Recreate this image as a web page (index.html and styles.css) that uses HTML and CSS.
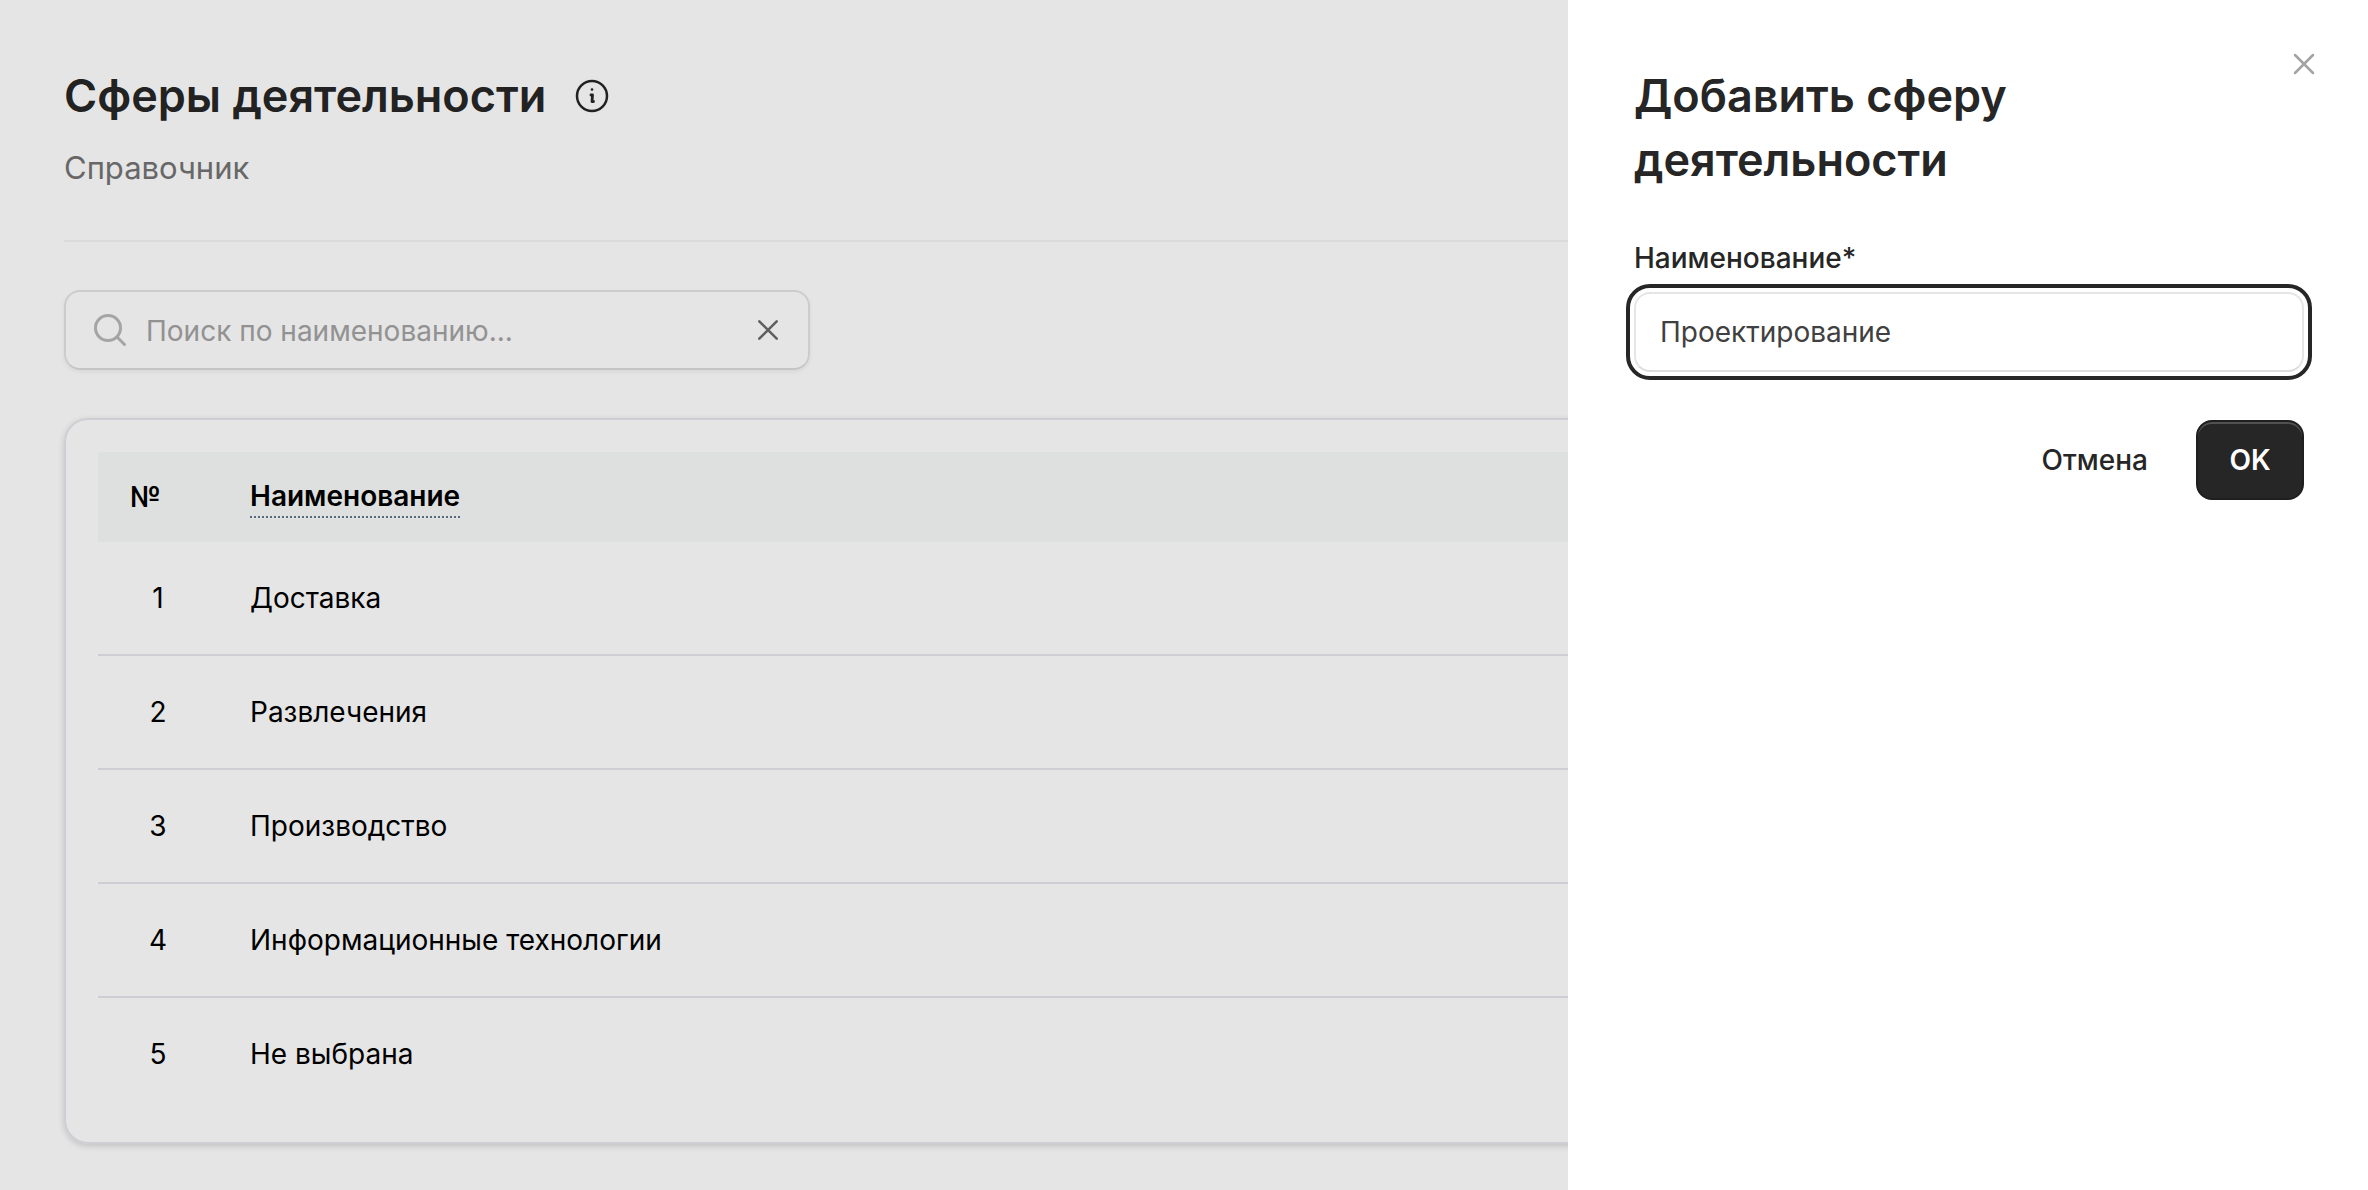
FILE: index.html
```html
<!DOCTYPE html>
<html lang="ru">
<head>
  <meta charset="UTF-8">
  <meta name="viewport" content="width=device-width, initial-scale=1.0">
  <title>Сферы деятельности</title>
  <link rel="stylesheet" href="styles.css">
</head>
<body>
  <!-- Страница справочника -->
  <main class="page">
    <header class="page-header">
      <div class="title-row">
        <h1>Сферы деятельности</h1>
        <button class="icon-btn" type="button" aria-label="Информация">
          <svg width="36" height="36" viewBox="0 0 36 36" fill="none" stroke="currentColor" stroke-width="2.500" stroke-linecap="round" stroke-linejoin="round">
            <circle cx="18" cy="18" r="15"/>
            <path d="M17 17h1.500l-.5 6.500h1.500" stroke-width="2.800"/>
            <circle cx="18" cy="11.500" r="1.300" fill="currentColor" stroke="none"/>
          </svg>
        </button>
      </div>
      <p class="subtitle">Справочник</p>
    </header>

    <div class="search-bar">
      <svg width="36" height="36" viewBox="0 0 36 36" fill="none" stroke="currentColor" stroke-width="3" stroke-linecap="round">
        <circle cx="16" cy="16" r="12.500"/>
        <path d="M25 25l7.500 7.500"/>
      </svg>
      <input type="text" placeholder="Поиск по наименованию..." aria-label="Поиск по наименованию">
      <button class="icon-btn clear-btn" type="button" aria-label="Очистить">
        <svg width="24" height="24" viewBox="0 0 24 24" fill="none" stroke="currentColor" stroke-width="2.600" stroke-linecap="round">
          <path d="M3.300 3.300l17.400 17.400M20.700 3.300L3.300 20.700"/>
        </svg>
      </button>
    </div>

    <section class="card">
      <table>
        <thead>
          <tr>
            <th class="num">№</th>
            <th><button class="sort-btn" type="button">Наименование</button></th>
          </tr>
        </thead>
        <tbody>
          <tr><td class="num">1</td><td>Доставка</td></tr>
          <tr><td class="num">2</td><td>Развлечения</td></tr>
          <tr><td class="num">3</td><td>Производство</td></tr>
          <tr><td class="num">4</td><td>Информационные технологии</td></tr>
          <tr><td class="num">5</td><td>Не выбрана</td></tr>
        </tbody>
      </table>
    </section>
  </main>

  <div class="overlay"></div>

  <!-- Боковая панель -->
  <aside class="drawer" role="dialog" aria-labelledby="drawerTitle">
    <button class="icon-btn close-btn" type="button" aria-label="Закрыть">
      <svg width="24" height="24" viewBox="0 0 24 24" fill="none" stroke="currentColor" stroke-width="2.500" stroke-linecap="round">
        <path d="M3 3l18 18M21 3L3 21"/>
      </svg>
    </button>
    <h2 id="drawerTitle">Добавить сферу деятельности</h2>
    <form>
      <label for="nameInput">Наименование*</label>
      <input class="name-input" id="nameInput" type="text" value="Проектирование">
      <div class="actions">
        <button class="btn" type="button">Отмена</button>
        <button class="btn btn-primary" type="button">OK</button>
      </div>
    </form>
  </aside>
</body>
</html>
```
FILE: styles.css
```css
* {
  box-sizing: border-box;
}

body {
  margin: 0;
  background-color: #ffffff;
  color: #000000;
  font-family: Inter, "Liberation Sans", sans-serif;
  font-size: 28px;
  line-height: 40px;
}

button,
input {
  font: inherit;
  color: inherit;
}

button {
  padding: 0;
  border: none;
  background: none;
  cursor: pointer;
}

h1,
h2 {
  margin: 0;
  font-size: 45px;
  font-weight: 600;
  line-height: 64px;
  color: #262626;
}

.icon-btn {
  display: flex;
}

/* Страница */
.page {
  padding: 64px 64px 40px;
}

.page-header {
  padding-bottom: 48px;
  border-bottom: 2px solid #f4f4f4;
}

.title-row {
  display: flex;
  align-items: center;
  gap: 28px;
  color: #262626;
}

.subtitle {
  margin: 16px 0 0;
  font-size: 31px;
  line-height: 48px;
  color: #737373;
}

/* Поиск */
.search-bar {
  display: flex;
  align-items: center;
  gap: 18px;
  width: 746px;
  max-width: 100%;
  height: 80px;
  margin: 48px 0;
  padding: 0 28px 0 26px;
  border: 2px solid #e4e4e4;
  border-bottom-color: #dcdcdc;
  border-radius: 16px;
  box-shadow: 0 2px 4px rgba(0, 0, 0, 0.06);
  color: #b8b8b8;
}

.search-bar input {
  flex: 1;
  min-width: 0;
  padding: 2px 0 0;
  border: none;
  outline: none;
  background: none;
}

.search-bar input::placeholder {
  color: #a3a3a3;
  opacity: 1;
}

.clear-btn {
  color: #6b6b6b;
}

/* Таблица */
.card {
  padding: 32px;
  border: 2px solid #e6e6ed;
  border-radius: 24px;
  box-shadow: 0 2px 6px rgba(0, 0, 0, 0.16);
}

table {
  width: 100%;
  border-collapse: separate;
  border-spacing: 0;
}

th {
  height: 90px;
  padding: 0 32px;
  background-color: #f8faf9;
  font-weight: 600;
  text-align: left;
}

td {
  height: 114px;
  padding: 0 32px;
  border-bottom: 2px solid #e6e6ed;
}

tr:last-child td {
  height: 112px;
  border-bottom: none;
}

.num {
  width: 120px;
}

td.num {
  text-align: center;
}

.sort-btn {
  border-bottom: 2px dotted #64748b;
  font-weight: 600;
}

/* Затемнение */
.overlay {
  position: fixed;
  inset: 0;
  background-color: rgba(0, 0, 0, 0.1);
}

/* Боковая панель */
.drawer {
  position: fixed;
  top: 0;
  right: 0;
  bottom: 0;
  width: 800px;
  max-width: 100%;
  padding: 64px 64px 64px 66px;
  background-color: #ffffff;
  color: #262626;
}

.drawer h2 {
  max-width: 480px;
}

.close-btn {
  position: absolute;
  top: 52px;
  right: 52px;
  color: #a3a3a3;
}

.drawer form {
  margin-top: 48px;
}

.drawer label {
  display: block;
  margin-bottom: 16px;
  font-weight: 500;
  line-height: 36px;
}

.name-input {
  display: block;
  width: 100%;
  height: 80px;
  padding: 0 24px;
  border: 2px solid #e5e5e5;
  border-bottom-color: #dcdcdc;
  border-radius: 16px;
  outline: 4px solid #262626;
  outline-offset: 4px;
  color: #404040;
}

.actions {
  display: flex;
  justify-content: flex-end;
  gap: 16px;
  margin-top: 48px;
}

.btn {
  height: 80px;
  padding: 0 32px;
  border-radius: 16px;
  font-weight: 500;
}

.btn-primary {
  min-width: 108px;
  padding: 0 24px;
  background-color: #262626;
  border: 2px solid #1f1f1f;
  box-shadow: inset 0 2px 0 rgba(255, 255, 255, 0.2);
  font-weight: 600;
  color: #ffffff;
}
```
